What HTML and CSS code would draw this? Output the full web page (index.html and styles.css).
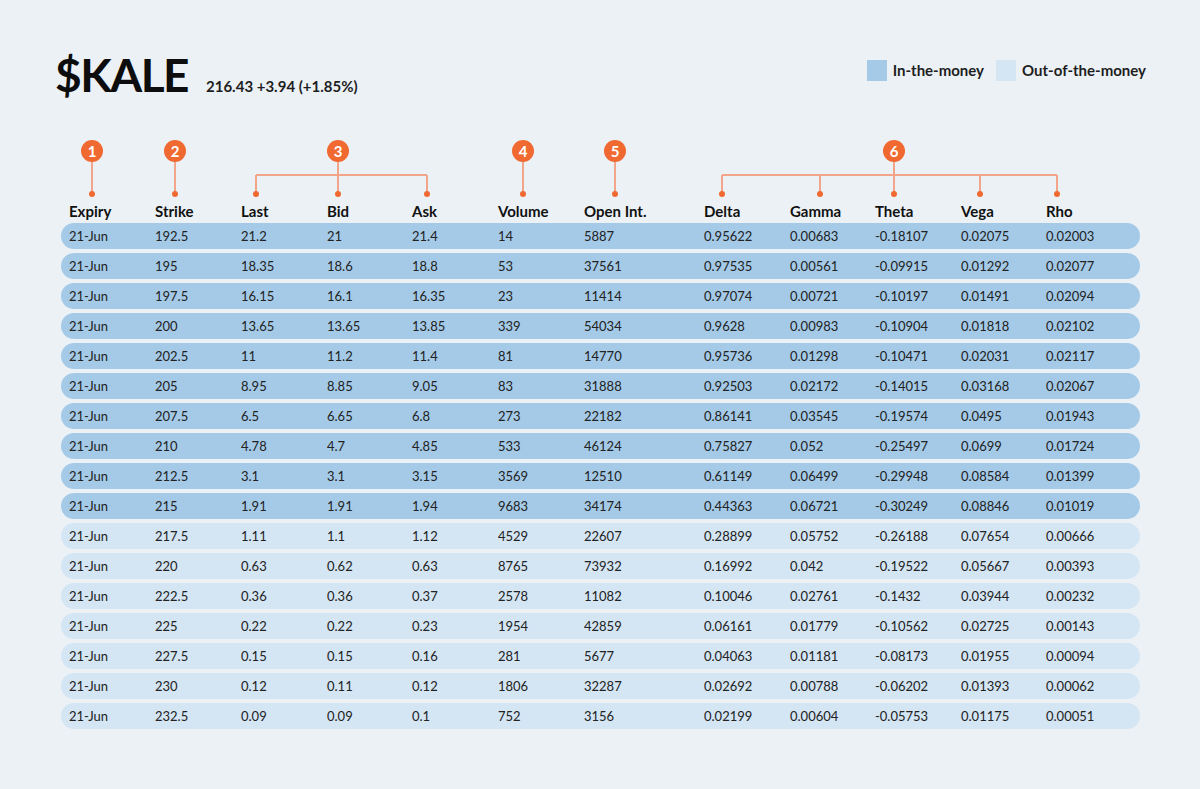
FILE: index.html
```html
<!DOCTYPE html>
<html>
<head>
<meta charset="utf-8">
<link rel="stylesheet" href="styles.css">
</head>
<body>
<div class="page">
  <header class="top">
    <div class="ticker">
      <h1 class="symbol">$KALE</h1>
      <span class="quote">216.43 +3.94 (+1.85%)</span>
    </div>
    <div class="legend">
      <div class="legend-item"><span class="swatch itm"></span>In-the-money</div>
      <div class="legend-item"><span class="swatch otm"></span>Out-of-the-money</div>
    </div>
  </header>

  <div class="table">
    <svg class="notes" width="1079" height="60" viewBox="0 0 1079 60">
      <g stroke="#f2a589" stroke-width="2" fill="none">
        <line x1="31" y1="12" x2="31" y2="55"/>
        <line x1="114" y1="12" x2="114" y2="55"/>
        <line x1="195" y1="36" x2="366" y2="36"/>
        <line x1="195" y1="36" x2="195" y2="55"/>
        <line x1="277" y1="12" x2="277" y2="55"/>
        <line x1="366" y1="36" x2="366" y2="55"/>
        <line x1="462" y1="12" x2="462" y2="55"/>
        <line x1="554" y1="12" x2="554" y2="55"/>
        <line x1="661" y1="36" x2="996" y2="36"/>
        <line x1="661" y1="36" x2="661" y2="55"/>
        <line x1="759" y1="36" x2="759" y2="55"/>
        <line x1="833" y1="12" x2="833" y2="55"/>
        <line x1="919" y1="36" x2="919" y2="55"/>
        <line x1="996" y1="36" x2="996" y2="55"/>
      </g>
      <g fill="#f06930">
        <circle cx="31" cy="55" r="3"/>
        <circle cx="114" cy="55" r="3"/>
        <circle cx="195" cy="55" r="3"/>
        <circle cx="277" cy="55" r="3"/>
        <circle cx="366" cy="55" r="3"/>
        <circle cx="462" cy="55" r="3"/>
        <circle cx="554" cy="55" r="3"/>
        <circle cx="661" cy="55" r="3"/>
        <circle cx="759" cy="55" r="3"/>
        <circle cx="833" cy="55" r="3"/>
        <circle cx="919" cy="55" r="3"/>
        <circle cx="996" cy="55" r="3"/>
        <circle cx="31" cy="12" r="11"/>
        <circle cx="114" cy="12" r="11"/>
        <circle cx="277" cy="12" r="11"/>
        <circle cx="462" cy="12" r="11"/>
        <circle cx="554" cy="12" r="11"/>
        <circle cx="833" cy="12" r="11"/>
      </g>
      <g class="num" fill="#ffffff" text-anchor="middle">
        <text x="31" y="17.5">1</text>
        <text x="114" y="17.5">2</text>
        <text x="277" y="17.5">3</text>
        <text x="462" y="17.5">4</text>
        <text x="554" y="17.5">5</text>
        <text x="833" y="17.5">6</text>
      </g>
    </svg>

    <div class="row head">
      <span>Expiry</span><span>Strike</span><span>Last</span><span>Bid</span><span>Ask</span><span>Volume</span><span>Open Int.</span><span>Delta</span><span>Gamma</span><span>Theta</span><span>Vega</span><span>Rho</span>
    </div>

    <div class="row itm"><span>21-Jun</span><span>192.5</span><span>21.2</span><span>21</span><span>21.4</span><span>14</span><span>5887</span><span>0.95622</span><span>0.00683</span><span>-0.18107</span><span>0.02075</span><span>0.02003</span></div>
    <div class="row itm"><span>21-Jun</span><span>195</span><span>18.35</span><span>18.6</span><span>18.8</span><span>53</span><span>37561</span><span>0.97535</span><span>0.00561</span><span>-0.09915</span><span>0.01292</span><span>0.02077</span></div>
    <div class="row itm"><span>21-Jun</span><span>197.5</span><span>16.15</span><span>16.1</span><span>16.35</span><span>23</span><span>11414</span><span>0.97074</span><span>0.00721</span><span>-0.10197</span><span>0.01491</span><span>0.02094</span></div>
    <div class="row itm"><span>21-Jun</span><span>200</span><span>13.65</span><span>13.65</span><span>13.85</span><span>339</span><span>54034</span><span>0.9628</span><span>0.00983</span><span>-0.10904</span><span>0.01818</span><span>0.02102</span></div>
    <div class="row itm"><span>21-Jun</span><span>202.5</span><span>11</span><span>11.2</span><span>11.4</span><span>81</span><span>14770</span><span>0.95736</span><span>0.01298</span><span>-0.10471</span><span>0.02031</span><span>0.02117</span></div>
    <div class="row itm"><span>21-Jun</span><span>205</span><span>8.95</span><span>8.85</span><span>9.05</span><span>83</span><span>31888</span><span>0.92503</span><span>0.02172</span><span>-0.14015</span><span>0.03168</span><span>0.02067</span></div>
    <div class="row itm"><span>21-Jun</span><span>207.5</span><span>6.5</span><span>6.65</span><span>6.8</span><span>273</span><span>22182</span><span>0.86141</span><span>0.03545</span><span>-0.19574</span><span>0.0495</span><span>0.01943</span></div>
    <div class="row itm"><span>21-Jun</span><span>210</span><span>4.78</span><span>4.7</span><span>4.85</span><span>533</span><span>46124</span><span>0.75827</span><span>0.052</span><span>-0.25497</span><span>0.0699</span><span>0.01724</span></div>
    <div class="row itm"><span>21-Jun</span><span>212.5</span><span>3.1</span><span>3.1</span><span>3.15</span><span>3569</span><span>12510</span><span>0.61149</span><span>0.06499</span><span>-0.29948</span><span>0.08584</span><span>0.01399</span></div>
    <div class="row itm"><span>21-Jun</span><span>215</span><span>1.91</span><span>1.91</span><span>1.94</span><span>9683</span><span>34174</span><span>0.44363</span><span>0.06721</span><span>-0.30249</span><span>0.08846</span><span>0.01019</span></div>
    <div class="row otm"><span>21-Jun</span><span>217.5</span><span>1.11</span><span>1.1</span><span>1.12</span><span>4529</span><span>22607</span><span>0.28899</span><span>0.05752</span><span>-0.26188</span><span>0.07654</span><span>0.00666</span></div>
    <div class="row otm"><span>21-Jun</span><span>220</span><span>0.63</span><span>0.62</span><span>0.63</span><span>8765</span><span>73932</span><span>0.16992</span><span>0.042</span><span>-0.19522</span><span>0.05667</span><span>0.00393</span></div>
    <div class="row otm"><span>21-Jun</span><span>222.5</span><span>0.36</span><span>0.36</span><span>0.37</span><span>2578</span><span>11082</span><span>0.10046</span><span>0.02761</span><span>-0.1432</span><span>0.03944</span><span>0.00232</span></div>
    <div class="row otm"><span>21-Jun</span><span>225</span><span>0.22</span><span>0.22</span><span>0.23</span><span>1954</span><span>42859</span><span>0.06161</span><span>0.01779</span><span>-0.10562</span><span>0.02725</span><span>0.00143</span></div>
    <div class="row otm"><span>21-Jun</span><span>227.5</span><span>0.15</span><span>0.15</span><span>0.16</span><span>281</span><span>5677</span><span>0.04063</span><span>0.01181</span><span>-0.08173</span><span>0.01955</span><span>0.00094</span></div>
    <div class="row otm"><span>21-Jun</span><span>230</span><span>0.12</span><span>0.11</span><span>0.12</span><span>1806</span><span>32287</span><span>0.02692</span><span>0.00788</span><span>-0.06202</span><span>0.01393</span><span>0.00062</span></div>
    <div class="row otm"><span>21-Jun</span><span>232.5</span><span>0.09</span><span>0.09</span><span>0.1</span><span>752</span><span>3156</span><span>0.02199</span><span>0.00604</span><span>-0.05753</span><span>0.01175</span><span>0.00051</span></div>
  </div>
</div>
</body>
</html>
```

FILE: styles.css
```css
* { box-sizing: border-box; }

html, body {
  margin: 0;
  padding: 0;
  background: #ecf1f6;
}

body {
  font-family: Lato, "Noto Sans", "Liberation Sans", sans-serif;
  color: #1c1c1c;
}

.page {
  width: 1200px;
  height: 789px;
  padding-top: 52px;
}

.top {
  display: flex;
  justify-content: space-between;
  align-items: flex-start;
  padding: 0 54px 0 55px;
}

.ticker {
  display: flex;
  align-items: baseline;
  gap: 18px;
}

.symbol {
  margin: 0;
  font-size: 46px;
  line-height: 46px;
  font-weight: 700;
  color: #0d0d0d;
  letter-spacing: -1.5px;
}

.quote {
  font-size: 15px;
  font-weight: 700;
  color: #1e1e1e;
}

.legend {
  display: flex;
  gap: 12px;
  margin-top: 8px;
}

.legend-item {
  display: flex;
  align-items: center;
  gap: 6px;
  font-size: 15px;
  font-weight: 700;
  line-height: 21px;
  color: #1e1e1e;
}

.swatch {
  width: 20px;
  height: 21px;
  display: block;
}

.swatch.itm { background: #a4cae7; }
.swatch.otm { background: #d4e5f3; }

.table {
  margin: 41px 0 0 61px;
  width: 1079px;
}

.notes {
  display: block;
}

.notes .num {
  font-family: Lato, "Noto Sans", sans-serif;
  font-size: 15px;
  font-weight: 700;
}

.row {
  display: grid;
  grid-template-columns: 86px 86px 86px 85px 86px 86px 120px 86px 85px 86px 85px 1fr;
  padding-left: 8px;
  align-items: center;
}

.row.head {
  height: 24px;
  line-height: 24px;
  font-size: 15px;
  font-weight: 700;
  color: #111;
}

.row.itm, .row.otm {
  height: 26px;
  line-height: 26px;
  margin-bottom: 4px;
  border-radius: 13px;
  font-size: 13px;
  color: #222;
}

.row.itm { background: #a4cae7; }
.row.otm { background: #d4e5f3; }
```
